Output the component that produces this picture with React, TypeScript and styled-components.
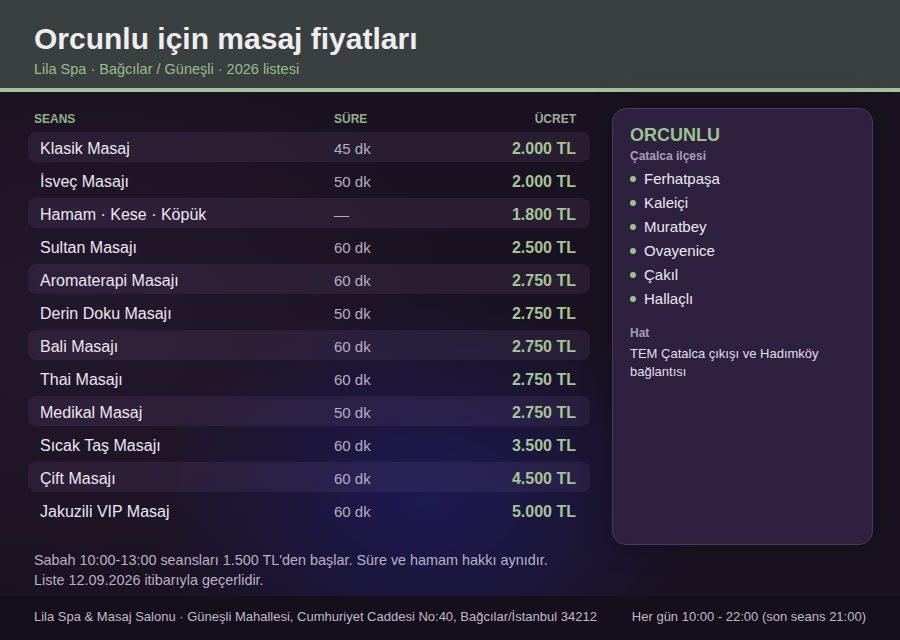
import React from "react";
import styled, { createGlobalStyle } from "styled-components";

const Global = createGlobalStyle`
  html, body { margin: 0; padding: 0; }
  body { background: #1a1220; font-family: "Liberation Sans", Arial, sans-serif; }
  * { box-sizing: border-box; }
`;

const Page = styled.div`
  width: 900px;
  height: 640px;
  display: flex;
  flex-direction: column;
  overflow: hidden;
  background:
    radial-gradient(ellipse 280px 210px at 430px 500px, rgba(30, 28, 100, 0.75), rgba(30, 28, 100, 0) 100%),
    radial-gradient(ellipse 420px 300px at 80px 330px, rgba(48, 30, 58, 0.45), rgba(48, 30, 58, 0) 100%),
    #1a1220;
`;

const Header = styled.header`
  background: #3a3f3f;
  border-bottom: 4px solid #a3c49a;
  padding: 22px 34px 9px;
  height: 92px;
`;

const Title = styled.h1`
  margin: 0;
  font-size: 30px;
  line-height: 34px;
  font-weight: 700;
  color: #eeedf2;
`;

const Subtitle = styled.div`
  font-size: 14.5px;
  line-height: 20px;
  margin-top: 3px;
  color: #9cbc8f;
`;

const Main = styled.main`
  display: grid;
  grid-template-columns: 562px 261px;
  grid-template-rows: 437px;
  column-gap: 22px;
  padding: 16px 27px 0 28px;
`;

const Table = styled.div`
  display: flex;
  flex-direction: column;
  gap: 3px;
`;

const HeadRow = styled.div`
  display: grid;
  grid-template-columns: 300px 1fr auto;
  align-items: center;
  height: 21px;
  padding: 1px 14px 0 6px;
`;

const HeadCell = styled.span<{ $right?: boolean }>`
  font-size: 12px;
  font-weight: 700;
  color: ${(p) => (p.$right ? "#9fae9c" : "#8fb386")};
  text-align: ${(p) => (p.$right ? "right" : "left")};
`;

const Row = styled.div<{ $striped: boolean }>`
  display: grid;
  grid-template-columns: 294px 1fr auto;
  align-items: baseline;
  height: 30px;
  padding: 8px 14px 0 12px;
  border-radius: 8px;
  line-height: 18px;
  background: ${(p) => (p.$striped ? "rgba(120, 95, 150, 0.15)" : "transparent")};
`;

const Name = styled.span`
  font-size: 16px;
  color: #ece6f2;
`;

const Duration = styled.span`
  font-size: 15px;
  color: #b6aec4;
`;

const Price = styled.span`
  font-size: 16px;
  font-weight: 700;
  color: #a5c596;
  text-align: right;
`;

const Card = styled.aside`
  background: #2e2140;
  border: 1px solid #4a3b5e;
  border-radius: 14px;
  padding: 15px 17px;
  box-shadow: 0 0 30px rgba(0, 0, 0, 0.25);
`;

const CardTitle = styled.div`
  font-size: 18px;
  font-weight: 700;
  color: #9cc28e;
  line-height: 22px;
`;

const CardLabel = styled.div<{ $gap?: number }>`
  font-size: 12px;
  font-weight: 700;
  color: #a99db8;
  line-height: 16px;
  margin-top: ${(p) => p.$gap ?? 0}px;
`;

const List = styled.ul`
  list-style: none;
  margin: 3px 0 0;
  padding: 0;
`;

const Item = styled.li`
  display: flex;
  align-items: center;
  gap: 8px;
  font-size: 15px;
  line-height: 24px;
  color: #ece6f2;
  &::before {
    content: "";
    width: 6px;
    height: 6px;
    border-radius: 50%;
    background: #9cc28e;
  }
`;

const CardText = styled.div`
  font-size: 13px;
  line-height: 18px;
  color: #e4deea;
  margin-top: 4px;
`;

const Notes = styled.div`
  padding: 5px 34px 0;
  font-size: 14.4px;
  line-height: 20px;
  color: #b9b1c7;
`;

const Footer = styled.footer`
  margin-top: auto;
  height: 44px;
  background: #150e1b;
  display: flex;
  align-items: center;
  justify-content: space-between;
  padding: 0 34px 4px;
  font-size: 13px;
  color: #c2bacb;
`;

const rows: [string, string, string][] = [
  ["Klasik Masaj", "45 dk", "2.000 TL"],
  ["İsveç Masajı", "50 dk", "2.000 TL"],
  ["Hamam · Kese · Köpük", "—", "1.800 TL"],
  ["Sultan Masajı", "60 dk", "2.500 TL"],
  ["Aromaterapi Masajı", "60 dk", "2.750 TL"],
  ["Derin Doku Masajı", "50 dk", "2.750 TL"],
  ["Bali Masajı", "60 dk", "2.750 TL"],
  ["Thai Masajı", "60 dk", "2.750 TL"],
  ["Medikal Masaj", "50 dk", "2.750 TL"],
  ["Sıcak Taş Masajı", "60 dk", "3.500 TL"],
  ["Çift Masajı", "60 dk", "4.500 TL"],
  ["Jakuzili VIP Masaj", "60 dk", "5.000 TL"],
];

const areas = ["Ferhatpaşa", "Kaleiçi", "Muratbey", "Ovayenice", "Çakıl", "Hallaçlı"];

export default function App() {
  return (
    <>
      <Global />
      <Page>
        <Header>
          <Title>Orcunlu için masaj fiyatları</Title>
          <Subtitle>Lila Spa · Bağcılar / Güneşli · 2026 listesi</Subtitle>
        </Header>
        <Main>
          <Table>
            <HeadRow>
              <HeadCell>SEANS</HeadCell>
              <HeadCell>SÜRE</HeadCell>
              <HeadCell $right>ÜCRET</HeadCell>
            </HeadRow>
            {rows.map(([n, d, p], i) => (
              <Row key={n} $striped={i % 2 === 0}>
                <Name>{n}</Name>
                <Duration>{d}</Duration>
                <Price>{p}</Price>
              </Row>
            ))}
          </Table>
          <Card>
            <CardTitle>ORCUNLU</CardTitle>
            <CardLabel $gap={2}>Çatalca ilçesi</CardLabel>
            <List>
              {areas.map((a) => (
                <Item key={a}>{a}</Item>
              ))}
            </List>
            <CardLabel $gap={14}>Hat</CardLabel>
            <CardText>TEM Çatalca çıkışı ve Hadımköy bağlantısı</CardText>
          </Card>
        </Main>
        <Notes>
          Sabah 10:00-13:00 seansları 1.500 TL'den başlar. Süre ve hamam hakkı aynıdır.
          <br />
          Liste 12.09.2026 itibarıyla geçerlidir.
        </Notes>
        <Footer>
          <span>Lila Spa &amp; Masaj Salonu · Güneşli Mahallesi, Cumhuriyet Caddesi No:40, Bağcılar/İstanbul 34212</span>
          <span>Her gün 10:00 - 22:00 (son seans 21:00)</span>
        </Footer>
      </Page>
    </>
  );
}
